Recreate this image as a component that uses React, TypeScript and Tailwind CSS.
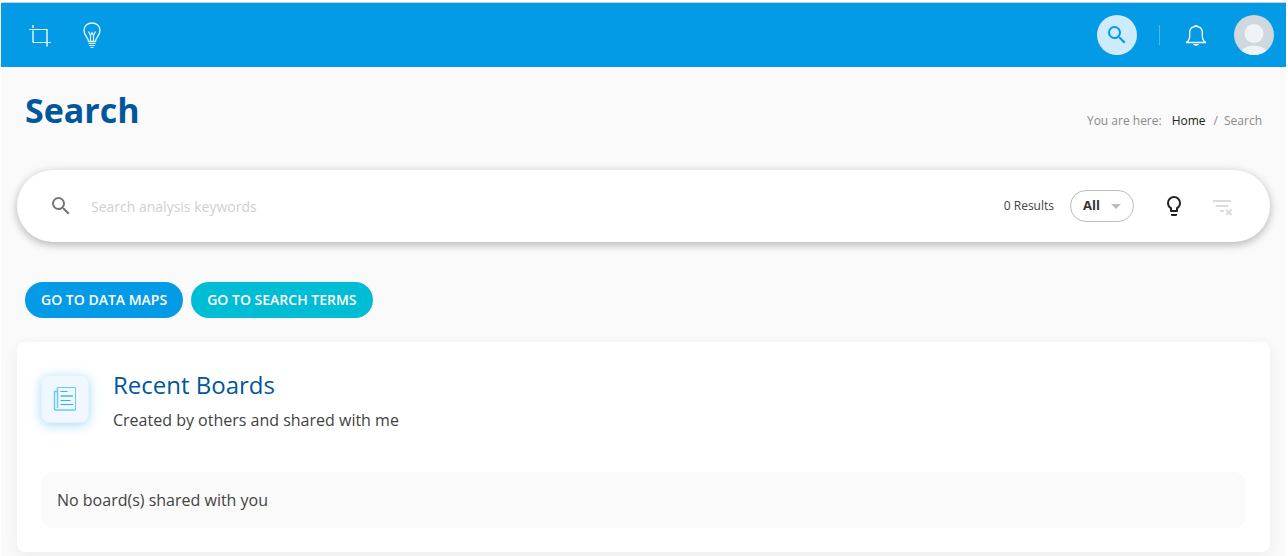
import { useState, type ReactNode } from "react";

const FILTERS = ["All", "Boards", "Data Maps", "Terms"];

function MagnifierIcon({ size = 24 }: { size?: number }) {
  return (
    <svg width={size} height={size} viewBox="0 0 24 24" fill="currentColor" aria-hidden>
      <path d="M15.5 14h-.79l-.28-.27A6.471 6.471 0 0 0 16 9.5 6.5 6.5 0 1 0 9.5 16c1.61 0 3.09-.59 4.23-1.57l.27.28v.79l5 4.99L20.49 19l-4.99-5zm-6 0C7.01 14 5 11.99 5 9.5S7.01 5 9.5 5 14 7.01 14 9.5 11.99 14 9.5 14z" />
    </svg>
  );
}

function CropIcon() {
  return (
    <svg width="24" height="24" viewBox="0 0 24 24" fill="none" stroke="currentColor" aria-hidden>
      <path d="M1 6.5h18M5 19.5h18" />
      <path d="M5 2v3M5 7.5v12M19 6v17.500" strokeWidth="1.500" />
    </svg>
  );
}

function LampIcon() {
  return (
    <svg width="24" height="28" viewBox="0 0 24 28" fill="none" stroke="currentColor" aria-hidden>
      <path
        d="M8.500 20.500c0-4-4.500-5.500-4.500-11C4 5 7.500 2 12 2s8 3 8 7.500c0 5.500-4.500 7-4.500 11z"
        strokeWidth="1.400"
      />
      <path d="M10.500 20v-5.500L8.500 10.500M13.500 20v-5.500l2-4M10.500 14.500l1.500-3 1.500 3" strokeWidth="1.200" />
      <path d="M8.500 22.500h7M9 24.500h6M10.500 26.500h3" />
    </svg>
  );
}

function BellIcon() {
  return (
    <svg width="24" height="24" viewBox="0 0 24 24" fill="none" stroke="currentColor" aria-hidden>
      <path
        d="M2 19.500h20c-3-1.500-3.700-3-3.700-6.500V9.500c0-3.600-2.300-6.200-6.300-6.200S5.700 5.900 5.700 9.500V13c0 3.500-.7 5-3.700 6.500z"
        strokeWidth="1.300"
      />
      <path d="M9 21h6c-.4 1.200-1.500 1.700-3 1.700s-2.600-.5-3-1.700z" fill="currentColor" stroke="none" />
      <path d="M10.500 2.500h3" />
    </svg>
  );
}

function BulbOutlineIcon() {
  return (
    <svg width="24" height="24" viewBox="0 0 24 24" fill="currentColor" aria-hidden>
      <path d="M12 2a7 7 0 0 0-7 7c0 2.380 1.190 4.470 3 5.740V17a1 1 0 0 0 1 1h6a1 1 0 0 0 1-1v-2.260c1.810-1.270 3-3.360 3-5.740a7 7 0 0 0-7-7zm2 11.700V16h-4v-2.300C8.480 12.630 7 11.530 7 9a5 5 0 0 1 10 0c0 2.490-1.510 3.650-3 4.700zM9 20h6v1a1 1 0 0 1-1 1h-4a1 1 0 0 1-1-1z" />
    </svg>
  );
}

function ClearFilterIcon() {
  return (
    <svg width="24" height="24" viewBox="0 0 24 24" fill="none" stroke="currentColor" strokeWidth="2" aria-hidden>
      <path d="M3 7h18M6 12h12M10 17h4M16 15.500l5.500 5.500M21.500 15.500L16 21" />
    </svg>
  );
}

function BoardIcon() {
  return (
    <svg width="24" height="26" viewBox="0 0 24 26" fill="none" stroke="currentColor" aria-hidden>
      <path d="M4.500 1.500h18v22.500" />
      <path d="M22.500 24H3a1.500 1.500 0 0 1-1.500-1.500V5.500h3M4.500 1.500v20.500" strokeWidth="1.500" />
      <path d="M7.500 5.500h7M7.500 14.500h10M7.500 18.500h12.500" stroke="#29b6f6" />
      <path d="M7.500 10h12.500" strokeWidth="2" />
    </svg>
  );
}

function Avatar() {
  return (
    <svg width="40" height="40" viewBox="0 0 40 40" aria-hidden>
      <clipPath id="avatar-clip">
        <circle cx="20" cy="20" r="20" />
      </clipPath>
      <g clipPath="url(#avatar-clip)">
        <rect width="40" height="40" fill="#cfd8dc" />
        <circle cx="20" cy="18.500" r="9.500" fill="#f0f3f5" />
        <ellipse cx="20" cy="40" rx="14" ry="9.500" fill="#f0f3f5" />
      </g>
    </svg>
  );
}

function IconButton({ label, children }: { label: string; children: ReactNode }) {
  return (
    <button type="button" aria-label={label} className="flex h-10 w-10 items-center justify-center">
      {children}
    </button>
  );
}

function TopBar() {
  return (
    <header className="flex h-16 items-center justify-between bg-[#039be5] pl-[19px] pr-3 text-white">
      <div className="flex items-center gap-3 text-[#e1f5fe]">
        <IconButton label="Crop">
          <CropIcon />
        </IconButton>
        <IconButton label="Insights">
          <LampIcon />
        </IconButton>
      </div>
      <div className="flex items-center">
        <button
          type="button"
          aria-label="Search"
          className="flex h-10 w-10 items-center justify-center rounded-full bg-[#cdebfa] text-[#039be5]"
        >
          <MagnifierIcon />
        </button>
        <span className="ml-[22px] mr-4 h-5 w-px bg-[#4fb9ec]" />
        <IconButton label="Notifications">
          <BellIcon />
        </IconButton>
        <button type="button" aria-label="Account" className="ml-[18px] rounded-full">
          <Avatar />
        </button>
      </div>
    </header>
  );
}

function SearchBar() {
  const [query, setQuery] = useState("");
  const [filter, setFilter] = useState("All");

  return (
    <form
      role="search"
      onSubmit={(e) => e.preventDefault()}
      className="flex h-[72px] items-center rounded-full bg-white pl-8 pr-9 shadow-[0_3px_8px_rgba(0,0,0,0.24),0_0_12px_rgba(0,0,0,0.06)]"
    >
      <span className="text-[#757575]">
        <MagnifierIcon />
      </span>
      <input
        type="text"
        aria-label="Search analysis keywords"
        placeholder="Search analysis keywords"
        value={query}
        onChange={(e) => setQuery(e.target.value)}
        className="ml-[18px] min-w-0 flex-1 bg-transparent pt-0.5 text-sm text-[#333] outline-none placeholder:text-[#d0d0d0]"
      />
      <span className="mr-4 text-xs text-[#424242]">0 Results</span>
      <div className="relative">
        <select
          aria-label="Result type"
          value={filter}
          onChange={(e) => setFilter(e.target.value)}
          className="h-8 w-16 appearance-none rounded-full border border-[#bdbdbd] bg-white pl-3 text-[13px] font-bold text-[#333]"
        >
          {FILTERS.map((name) => (
            <option key={name}>{name}</option>
          ))}
        </select>
        <svg
          width="10"
          height="5"
          viewBox="0 0 10 5"
          className="pointer-events-none absolute right-[13px] top-[14px] text-[#bdbdbd]"
          aria-hidden
        >
          <path d="M0 0h10L5 5z" fill="currentColor" />
        </svg>
      </div>
      <button type="button" aria-label="Suggestions" className="ml-7 text-[#212121]">
        <BulbOutlineIcon />
      </button>
      <button type="button" aria-label="Clear filters" disabled className="ml-6 text-[#dcdcdc]">
        <ClearFilterIcon />
      </button>
    </form>
  );
}

export default function App() {
  return (
    <div className="bg-white pl-px pr-0.5 pt-0.5 font-['Open_Sans',sans-serif]">
      <div className="min-h-[calc(100vh-2px)] border-t border-[#cfcfcf] bg-[#fafafa]">
        <TopBar />

        <main className="px-4 pb-1">
          <div className="flex items-start justify-between px-2 pb-[35px] pt-5">
            <h1 className="pb-0.5 text-[34px] font-bold leading-[46px] text-[#01579b]">Search</h1>
            <nav aria-label="Breadcrumb" className="flex pt-6 text-xs leading-5 text-[#8a8a8a]">
              <span>You are here:</span>
              <a href="#home" className="ml-[10px] text-[#212121]">
                Home
              </a>
              <span className="ml-2">/</span>
              <span className="ml-[6px]">Search</span>
            </nav>
          </div>

          <SearchBar />

          <div className="flex gap-2 px-2 pb-6 pt-10">
            <button
              type="button"
              className="h-9 rounded-full bg-[#039be5] px-4 text-sm font-semibold text-white"
            >
              GO TO DATA MAPS
            </button>
            <button
              type="button"
              className="h-9 rounded-full bg-[#00bcd4] px-4 text-sm font-semibold text-white"
            >
              GO TO SEARCH TERMS
            </button>
          </div>

          <section className="rounded-lg bg-white p-6 shadow-[0_4px_16px_rgba(0,0,0,0.06)]">
            <div className="flex items-start">
              <div className="mt-[9px] flex h-12 w-12 items-center justify-center rounded-lg border border-[#e3f2fb] bg-[#f0f8ff] text-[#6ac8f2] shadow-[0_2px_12px_rgba(3,155,229,0.35)]">
                <BoardIcon />
              </div>
              <div className="ml-6">
                <h2 className="text-2xl leading-[38px] text-[#01579b]">Recent Boards</h2>
                <p className="text-base leading-8 text-[#424242]">Created by others and shared with me</p>
              </div>
            </div>
            <p className="mt-9 rounded-xl bg-[#fafafa] p-4 text-base leading-6 text-[#424242]">
              No board(s) shared with you
            </p>
          </section>
        </main>
      </div>
    </div>
  );
}
